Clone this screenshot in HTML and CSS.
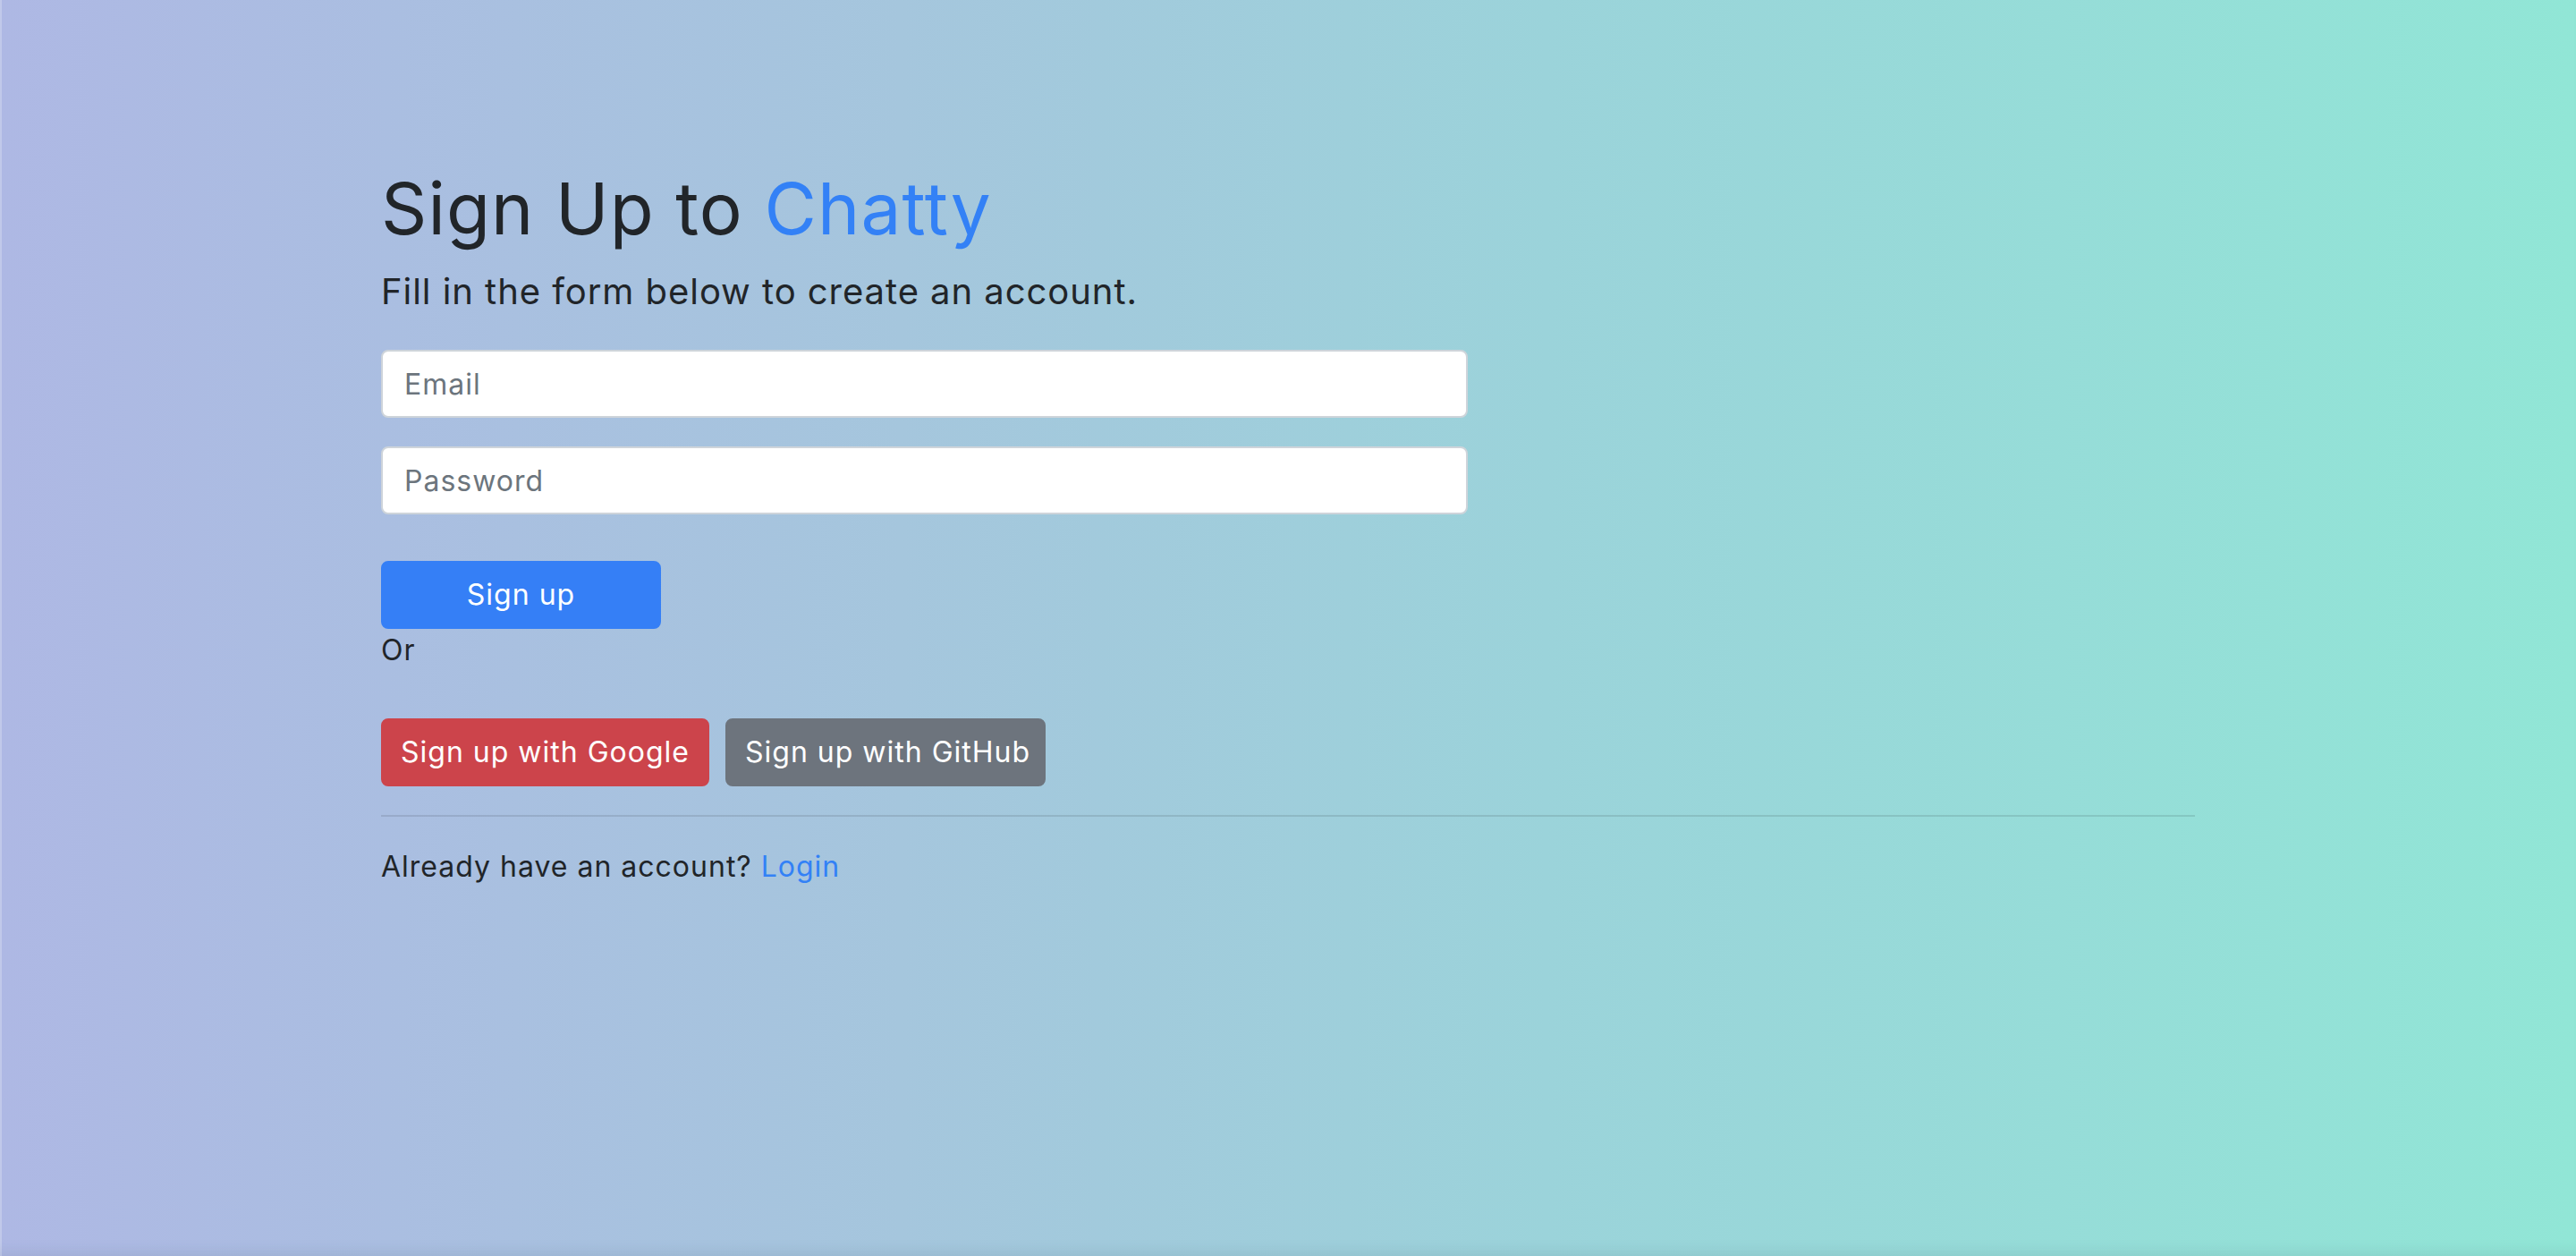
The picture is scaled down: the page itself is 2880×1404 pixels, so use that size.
FILE: index.html
```html
<!DOCTYPE html>
<html lang="en">
<head>
<meta charset="utf-8">
<title>Sign Up to Chatty</title>
<link rel="stylesheet" href="styles.css">
</head>
<body>
<div class="page">
  <div class="container">
    <form class="signup-form">
      <h1 class="title">Sign Up to <span class="brand">Chatty</span></h1>
      <p class="lead">Fill in the form below to create an account.</p>
      <div class="form-group">
        <input class="form-control" type="email" placeholder="Email">
      </div>
      <div class="form-group">
        <input class="form-control" type="password" placeholder="Password">
      </div>
      <div class="submit-row">
        <button class="btn btn-primary" type="button">Sign up</button>
      </div>
      <p class="or">Or</p>
      <div class="social">
        <button class="btn btn-danger" type="button">Sign up with Google</button>
        <button class="btn btn-secondary" type="button">Sign up with GitHub</button>
      </div>
      <hr class="divider">
      <p class="footer-text">Already have an account? <a class="link" href="#">Login</a></p>
    </form>
  </div>
</div>
</body>
</html>
```
FILE: styles.css
```css
* { box-sizing: border-box; }
html, body { margin: 0; padding: 0; }
body {
  font-family: "Inter", "Open Sans", "Liberation Sans", sans-serif;
  font-size: 32px;
  line-height: 1.5;
  color: #212529;
  letter-spacing: 1px;
}
.page {
  min-height: 1404px;
  background: linear-gradient(to right, #aeb8e4 0%, #a5c6dd 35%, #9bd3da 60%, #91e6d6 100%);
  box-shadow: inset 0 -16px 16px -12px rgba(40, 70, 90, 0.10), inset 2px 0 0 rgba(255,255,255,0.25);
  overflow: hidden;
}
.container {
  max-width: 2280px;
  margin: 0 auto;
  padding: 0 30px;
}
.signup-form {
  padding: 185px 96px 96px;
}
.title {
  margin: 0 0 15px;
  font-size: 80px;
  font-weight: 400;
  line-height: 96px;
  letter-spacing: 1.1px;
}
.brand { color: #3381f6; }
.lead {
  margin: 0 0 35px;
  font-size: 40px;
  line-height: 60px;
  font-weight: 400;
  letter-spacing: 0.95px;
}
.form-group { margin-bottom: 32px; }
.form-control {
  display: block;
  width: 1215px;
  height: 76px;
  padding: 12px 24px;
  font-family: inherit;
  font-size: 32px;
  letter-spacing: 1px;
  color: #495057;
  background: #fff;
  border: 2px solid #ced4da;
  border-radius: 8px;
  outline: none;
}
.form-control::placeholder { color: #6c757d; }
.submit-row { margin-top: 52px; }
.btn {
  display: inline-block;
  height: 76px;
  padding: 10px 20px;
  font-family: inherit;
  font-size: 32px;
  letter-spacing: 1px;
  line-height: 48px;
  border: 2px solid transparent;
  border-radius: 8px;
  color: #fff;
  cursor: pointer;
  white-space: nowrap;
}
.btn-primary { background: #357ff6; border-color: #357ff6; width: 313px; }
.btn-danger { background: #cc444b; border-color: #cc444b; width: 367px; }
.btn-secondary { background: #6d747d; border-color: #6d747d; width: 358px; }
.or { margin: 0 0 52px; line-height: 48px; }
.social { display: flex; gap: 18px; }
.divider {
  margin: 32px 0;
  border: 0;
  border-top: 2px solid rgba(0, 0, 0, 0.1);
}
.footer-text { margin: 0; line-height: 48px; }
.link { color: #3381f6; text-decoration: none; }
```
